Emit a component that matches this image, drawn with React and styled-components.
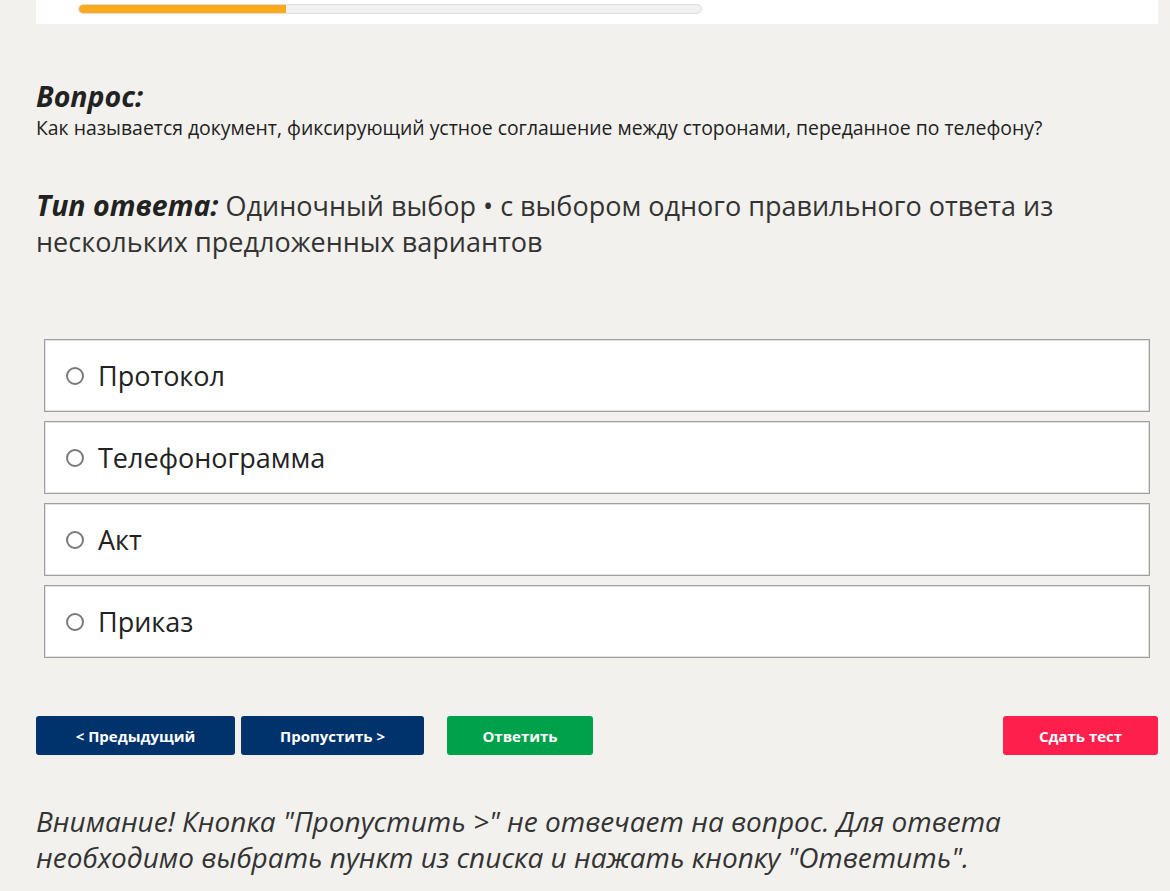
import React from "react";
import styled, { createGlobalStyle } from "styled-components";

const GlobalStyle = createGlobalStyle`
  body {
    margin: 0;
    background: #f2f1ee;
    font-family: "Open Sans", "Noto Sans", sans-serif;
    color: #222;
  }
`;

const options = ["Протокол", "Телефонограмма", "Акт", "Приказ"];

const Page = styled.div`
  padding: 0 12px 0 36px;
`;

const TopPanel = styled.div`
  background: #fff;
  height: 24px;
  padding: 4px 0 0 42px;
  box-sizing: border-box;
`;

const Progress = styled.div`
  width: 622px;
  height: 8px;
  border-radius: 5px;
  background: #f1f1f1;
  border: 1px solid #dedede;
  overflow: hidden;
`;

const ProgressFill = styled.div`
  height: 100%;
  background: #fbaa1c;
  border-radius: 5px 0 0 5px;
`;

const Heading = styled.h2`
  margin: 55px 0 0;
  font-size: 28.5px;
  line-height: 34px;
  font-weight: 700;
  font-style: italic;
  color: #222;
`;

const Question = styled.p`
  margin: 3px 0 0;
  font-size: 19.4px;
  line-height: 24px;
`;

const TypeLine = styled.p`
  margin: 48px 0 0;
  font-size: 27px;
  line-height: 36px;
  color: #333;
  max-width: 1030px;

  b {
    font-size: 28.5px;
    line-height: 1;
    font-style: italic;
    color: #222;
  }
`;

const OptionList = styled.div`
  display: flex;
  flex-direction: column;
  gap: 9px;
  margin: 79px 8px 0 8px;
`;

const Option = styled.label`
  display: flex;
  align-items: center;
  gap: 14px;
  height: 73px;
  box-sizing: border-box;
  padding-left: 21px;
  background: #fff;
  border: 1px solid #9f9f9f;
  box-shadow: inset 0 0 0 1px #e2e2e2;
  font-size: 27px;
  color: #222;
  cursor: pointer;
`;

const Radio = styled.span`
  width: 18px;
  height: 18px;
  border: 2px solid #7a7a7a;
  border-radius: 50%;
  box-sizing: border-box;
  flex-shrink: 0;
`;

const Actions = styled.div`
  display: flex;
  align-items: center;
  margin-top: 58px;
`;

const Button = styled.button`
  height: 39px;
  width: ${(p) => p.w}px;
  margin-left: ${(p) => p.gap || 0}px;
  border: none;
  border-radius: 3px;
  background: ${(p) => p.bg};
  color: #fff;
  font-family: "Open Sans", sans-serif;
  font-size: 15px;
  font-weight: 700;
  cursor: pointer;
`;

const Spacer = styled.div`
  flex: 1;
`;

const Warning = styled.p`
  margin: 48px 0 0;
  font-size: 28px;
  line-height: 36px;
  font-style: italic;
  color: #333;
  max-width: 1000px;
`;

export default function App() {
  return (
    <>
      <GlobalStyle />
      <Page>
        <TopPanel>
          <Progress>
            <ProgressFill style={{ width: "33.3%" }} />
          </Progress>
        </TopPanel>
        <Heading>Вопрос:</Heading>
        <Question>
          Как называется документ, фиксирующий устное соглашение между сторонами, переданное по телефону?
        </Question>
        <TypeLine>
          <b>Тип ответа:</b> Одиночный выбор • с выбором одного правильного ответа из нескольких предложенных вариантов
        </TypeLine>
        <OptionList>
          {options.map((o) => (
            <Option key={o}>
              <Radio />
              {o}
            </Option>
          ))}
        </OptionList>
        <Actions>
          <Button bg="#00326b" w={199}>&lt; Предыдущий</Button>
          <Button bg="#00326b" w={183} gap={6}>Пропустить &gt;</Button>
          <Button bg="#00a14b" w={146} gap={23}>Ответить</Button>
          <Spacer />
          <Button bg="#ff1f4d" w={155}>Сдать тест</Button>
        </Actions>
        <Warning>
          Внимание! Кнопка "Пропустить &gt;" не отвечает на вопрос. Для ответа необходимо выбрать пункт из списка и нажать кнопку "Ответить".
        </Warning>
      </Page>
    </>
  );
}
